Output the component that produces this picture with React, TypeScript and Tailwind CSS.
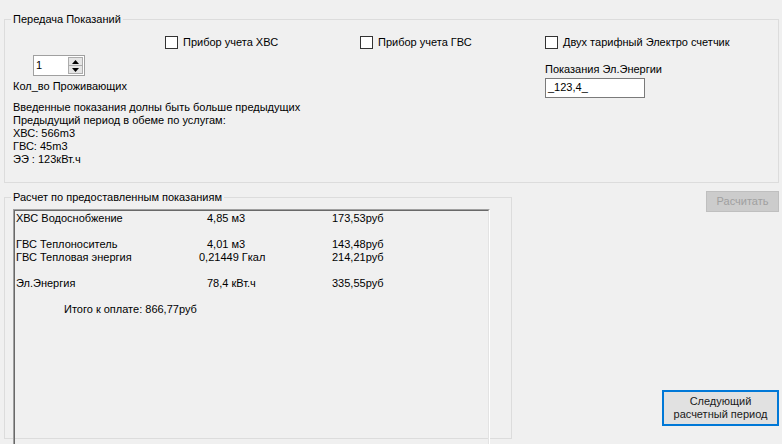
import React from "react";

const rows = [
  { name: "ХВС Водоснобжение", value: "4,85 м3", valueCls: "pl-[8px]", sum: "173,53руб" },
  { name: "", value: "", valueCls: "", sum: "" },
  { name: "ГВС Теплоноситель", value: "4,01 м3", valueCls: "pl-[8px]", sum: "143,48руб" },
  { name: "ГВС Тепловая энергия", value: "0,21449 Гкал", valueCls: "pl-0", sum: "214,21руб" },
  { name: "", value: "", valueCls: "", sum: "" },
  { name: "Эл.Энергия", value: "78,4 кВт.ч", valueCls: "pl-[8px]", sum: "335,55руб" },
  { name: "", value: "", valueCls: "", sum: "" },
];

function CheckBox({ label, className }: { label: string; className?: string }) {
  return (
    <label className={"flex items-center h-[13px] " + (className ?? "")}>
      <span className="w-[13px] h-[13px] border border-[#333333] bg-white shrink-0" />
      <span className="ml-[5px] leading-[13px] whitespace-nowrap">{label}</span>
    </label>
  );
}

function NumericUpDown() {
  return (
    <div className="ml-[20px] flex w-[52px] h-[21px] border border-[#a0a0a0] bg-white">
      <span className="flex-1 pl-[2px] pt-[2px] leading-[15px]">1</span>
      <div className="flex flex-col w-[15px] my-[1px] mr-[1px] border border-[#acacac]">
        <div className="flex-1 flex items-center justify-center bg-[#e5e5e5] border-b border-[#acacac]">
          <svg width="7" height="4" viewBox="0 0 7 4">
            <path d="M0 4 L3.5 0 L7 4 Z" fill="#000" />
          </svg>
        </div>
        <div className="flex-1 flex items-center justify-center bg-[#e5e5e5]">
          <svg width="7" height="4" viewBox="0 0 7 4">
            <path d="M0 0 L3.5 4 L7 0 Z" fill="#000" />
          </svg>
        </div>
      </div>
    </div>
  );
}

export default function App() {
  return (
    <div className="w-[782px] h-[444px] overflow-hidden bg-[#f0f0f0] text-[11px] text-black font-['Liberation_Sans',Arial,sans-serif]">
      {/* Передача Показаний */}
      <fieldset className="ml-[4px] mt-[13px] w-[775px] h-[170px] border border-[#dcdcdc] p-0">
        <legend className="ml-[6px] px-[2px] leading-[13px]">Передача Показаний</legend>
        <div className="flex pl-[8px] pt-[10px]">
          <div className="w-[532px] flex flex-col">
            <div className="flex">
              <CheckBox label="Прибор учета ХВС" className="ml-[152px] w-[195px]" />
              <CheckBox label="Прибор учета ГВС" />
            </div>
            <div className="mt-[6px]">
              <NumericUpDown />
            </div>
            <div className="mt-[4px] leading-[13px]">Кол_во Проживающих</div>
            <div className="mt-[8px] leading-[13px]">
              <div>Введенные показания долны быть больше предыдущих</div>
              <div>Предыдущий период в обеме по услугам:</div>
              <div>ХВС: 566m3</div>
              <div>ГВС: 45m3</div>
              <div>ЭЭ : 123кВт.ч</div>
            </div>
          </div>
          <div className="flex flex-col">
            <CheckBox label="Двух тарифный Электро счетчик" />
            <div className="mt-[14px] leading-[13px]">Показания Эл.Энергии</div>
            <div className="mt-[2px] w-[100px] h-[20px] border border-[#7a7a7a] bg-white pl-[2px] leading-[17px]">
              _123,4_
            </div>
          </div>
        </div>
      </fieldset>

      <div className="flex items-start mt-[8px]">
        {/* Расчет по предоставленным показаниям */}
        <fieldset className="ml-[4px] w-[508px] h-[248px] border border-[#dcdcdc] p-0 shrink-0">
          <legend className="ml-[6px] px-[2px] leading-[13px]">Расчет по предоставленным показаниям</legend>
          <div className="ml-[8px] mt-[5px] w-[477px] h-[241px] border-t border-l border-[#a0a0a0] border-r border-r-white">
            <div className="h-full border-t border-l border-[#696969] border-r border-r-[#e3e3e3] pt-[1px] pl-[1px] leading-[13px]">
              {rows.map((r, i) => (
                <div key={i} className="grid grid-cols-[183px_133px_1fr] h-[13px]">
                  <span className="whitespace-nowrap">{r.name}</span>
                  <span className={"whitespace-nowrap " + r.valueCls}>{r.value}</span>
                  <span className="whitespace-nowrap">{r.sum}</span>
                </div>
              ))}
              <div className="pl-[48px]">Итого к оплате: 866,77руб</div>
            </div>
          </div>
        </fieldset>

        <div className="flex-1 flex flex-col items-end pr-[3px]">
          <button
            disabled
            className="w-[73px] h-[21px] bg-[#cccccc] border border-[#bfbfbf] text-[#a0a0a0] leading-[19px] text-center"
          >
            Расчитать
          </button>
          <button className="mt-[178px] w-[117px] h-[36px] bg-[#e1e1e1] border-2 border-[#0078d7] text-[#1a1a1a] leading-[13px] text-center">
            Следующий
            <br />
            расчетный период
          </button>
        </div>
      </div>
    </div>
  );
}
